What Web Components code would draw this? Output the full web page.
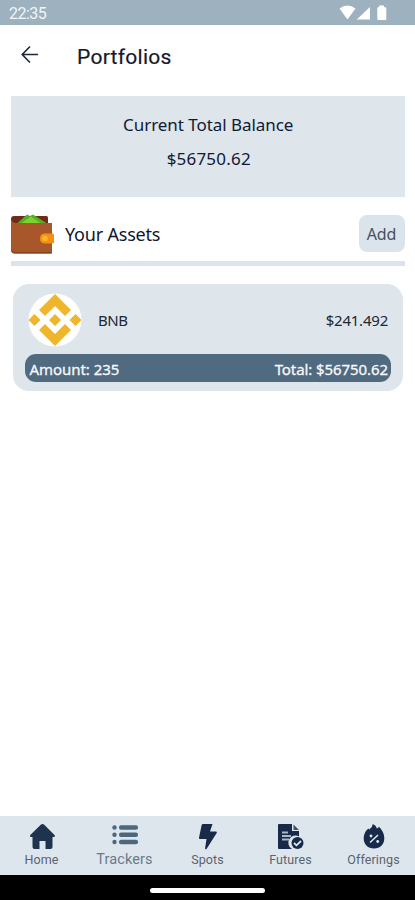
<!DOCTYPE html>
<html lang="en"><head><meta charset="utf-8"><title>Portfolios</title>
<style>
html,body{margin:0;height:100%;background:#fff}
</style></head><body>
<portfolio-app></portfolio-app>
<script>
function define(name, html){
  const t=document.createElement('template');t.innerHTML=html;
  customElements.define(name,class extends HTMLElement{
    constructor(){super();this.attachShadow({mode:'open'}).append(t.content.cloneNode(true));}
  });
}
define('status-bar',`<style>
:host{display:flex;box-sizing:border-box;height:25px;background:#9eb1be;color:#eff5f8;font:400 16px/28px Roboto,sans-serif;padding:0 28px 0 9px;justify-content:space-between}
svg{display:block}span{letter-spacing:-.5px}</style>
<span>22:35</span>
<svg width="48" height="25" viewBox="339 0 48 25" fill="#fff"><path d="M339.5 8.6Q347.500 2.600 355.500 8.600L347.500 19.600ZM370 7v12.600h-13.300ZM379 5.600h5v1.600h1.500q.8 0 .8.800v11q0 .9-.8.900h-7.400q-.8 0-.8-.9V8q0-.8.800-.8h.9Z"/></svg>`);
define('page-header',`<style>
:host{display:flex;height:71px;box-sizing:border-box;padding-left:20px;align-items:flex-start}
svg{margin-top:20px;flex:none}h1{margin:19px 0 0 37px;font:400 21px/26px Roboto,sans-serif;letter-spacing:.28px;color:#15192a;-webkit-text-stroke:.2px #15192a}</style>
<svg width="20" height="20" viewBox="0 0 20 20" fill="none" stroke="#1d2638" stroke-width="1.6"><path d="M18 9.500H2.500M10 1.500L2.200 9.500L10 17.500"/></svg><h1><slot></slot></h1>`);
define('balance-card',`<style>
:host{display:flex;flex-direction:column;align-items:center;height:101px;box-sizing:border-box;margin:0 10.500px 0 11px;background:#dee5eb;color:#111a34;font:400 17px/24px "Noto Sans",sans-serif;padding-top:17px;gap:10px}
.l{letter-spacing:-.05px;margin-left:1px}.v{letter-spacing:.2px;margin-left:2px}</style><div class="l"><slot name="label"></slot></div><div class="v"><slot></slot></div>`);
define('add-button',`<style>:host{display:block;width:46px;height:37px;border-radius:8px;background:#dbe4ea;color:#46505f;text-align:center;font:400 16px/39px "Noto Sans",sans-serif;letter-spacing:-.2px}</style><slot></slot>`);
define('assets-heading',`<style>
:host{display:flex;box-sizing:border-box;height:69px;margin:0 10.500px 0 11px;border-bottom:5px solid #dbe4ec;align-items:flex-start}
svg{margin-top:17px;flex:none}h2{font:400 18px/26px "Noto Sans",sans-serif;margin:24px auto 0 11px;color:#10162f;letter-spacing:-.2px}add-button{margin-top:18px}</style>
<svg width="43" height="40" viewBox="0 0 43 40"><path d="M0 5q0-3 3-3h32.500q1.500 0 1.500 2v6H0Z" fill="#71291a"/><path d="M6 9.500L16 .5L19 2L22 .5L36 9.500Z" fill="#55ae24"/><path d="M10 9.500L20 2.500L30 9.500Z" fill="#7bd332"/><path d="M0 5q1 4 5 4h36v29.500q0 1-1 1H4q-4 0-4-4Z" fill="#a7572a"/><path d="M0 35q1 3 4 3h37v.700q0 .8-1 .8H4q-4 0-4-4Z" fill="#8b421e"/><path d="M33 19.500h8.500q1.500 0 1.500 1.500v7q0 1.500-1.500 1.500H33q-4-.5-4-5t4-5Z" fill="#f39112"/><circle cx="34" cy="24.500" r="2.700" fill="#ffb82d"/></svg>
<h2><slot></slot></h2><add-button>Add</add-button>`);
define('asset-card',`<style>
:host{display:block;box-sizing:border-box;height:107px;margin:18px 12px 0 13px;border-radius:16px;background:#dee5eb;padding:9px 12px 0;font:400 15px/22px "Noto Sans",sans-serif;color:#202833}
.top{display:flex;align-items:center;height:54px;padding:0 3px;margin-bottom:7px}
.n{margin:0 auto 0 16px;letter-spacing:-.4px}.p{letter-spacing:-.22px}
.bar{display:flex;justify-content:space-between;height:28px;border-radius:11px;background:#506a80;color:#f6f9fc;padding:0 3px 0 4.500px;line-height:30px;-webkit-text-stroke:.3px #f6f9fc}
.bar .a{letter-spacing:-.05px}.t{letter-spacing:-.08px}
</style><div class="top"><svg width="54" height="54" viewBox="0 0 54 54"><circle cx="27" cy="27" r="26.500" fill="#fff"/><g fill="#efb62b"><path d="M27 1L43 17L37 23L27 13L17 23L11 17ZM27 53L43 37L37 31L27 41L17 31L11 37ZM27 21L33 27L27 33L21 27ZM6.500 21L12.500 27L6.500 33L.5 27ZM47.500 21L53.500 27L47.500 33L41.500 27Z"/></g></svg><span class="n"><slot name="name"></slot></span><span class="p"><slot name="price"></slot></span></div>
<div class="bar"><span class="a"><slot name="amount"></slot></span><span class="t"><slot name="total"></slot></span></div>`);
define('nav-item',`<style>:host{display:flex;flex:1;flex-direction:column;align-items:center;padding-top:7px;font:400 12.500px/16px Roboto,sans-serif;letter-spacing:.12px;color:#59636f}:host([active]){font-size:14.500px;letter-spacing:.1px;color:#687b8b}
.i{height:29px}.l{white-space:nowrap}</style><div class="i"><slot name="icon"></slot></div><div class="l"><slot></slot></div>`);
define('bottom-nav',`<style>:host{display:flex;height:59px;background:#dee6ed}svg{display:block}</style>
<nav-item><svg slot="icon" width="28" height="28" viewBox="0 0 28 28" fill="#1f3350"><path d="M14.500 1q.8 0 1.500.6L26.500 12q1 1.200-.2 2H24.500v10q0 2-2 2H17.500v-8h-6v8h-5q-2 0-2-2V14H2.500q-1-.8-.2-2L13 1.600Q13.700 1 14.500 1Z"/></svg>Home</nav-item>
<nav-item active><svg slot="icon" width="28" height="28" viewBox="0 0 28 28" fill="#4d687d"><circle cx="3.500" cy="4.500" r="2.200"/><circle cx="3.500" cy="11.700" r="2.200"/><circle cx="3.500" cy="19" r="2.200"/><rect x="8" y="2.200" width="19" height="4.600" rx="2"/><rect x="8" y="9.400" width="19" height="4.600" rx="2"/><rect x="8" y="16.700" width="19" height="4.600" rx="2"/></svg>Trackers</nav-item>
<nav-item><svg slot="icon" width="28" height="28" viewBox="0 0 28 28" fill="#172a49"><path d="M9 1h9.500L16 8.500h6q1.400.2.700 1.500L12.500 26q-1.500 1-1.400-.8L12.500 16H6q-1.300 0-1-1.300L7.600 2.300Q7.800 1 9 1Z"/></svg>Spots</nav-item>
<nav-item><svg slot="icon" width="28" height="28" viewBox="0 0 28 28"><path d="M2 1h13v7h7v5.500a7 7 0 0 0-7 12.500H2Q1 26 1 25V2Q1 1 2 1Z" fill="#172a49"/><path d="M16.500 1.500L22 7h-5.500Z" fill="#41546d"/><path d="M5 9.500h6M5 13h9M5 16.500h7" stroke="#aab8c6" stroke-width="2"/><circle cx="20.500" cy="20" r="6" fill="#172a49"/><path d="M17 20l2.500 2.300L24 18" fill="none" stroke="#dee6ed" stroke-width="1.800"/></svg>Futures</nav-item>
<nav-item><svg slot="icon" width="28" height="28" viewBox="0 0 28 28"><path d="M12.800 1Q16 2.400 17 5.500Q18.500 5 19 3.800Q24.300 9 24.300 15.200C24.300 21.500 20 25.500 14 25.500S3.700 21.500 3.700 15.500Q3.700 9.500 8.300 5.500L9.300 6.500Q12.500 4.500 12.800 1Z" fill="#172a49"/><path d="M10 19.500L18 12" stroke="#dee6ed" stroke-width="1.500"/><circle cx="11" cy="13" r="1.400" fill="#dee6ed"/><circle cx="17.700" cy="18.500" r="1.400" fill="#dee6ed"/></svg>Offerings</nav-item>`);
define('gesture-bar',`<style>:host{display:flex;height:25px;background:#000;align-items:center;justify-content:center}i{width:115px;height:5px;border-radius:3px;background:#fff;margin-top:5px}</style><i></i>`);
define('portfolio-app',`<style>:host{display:flex;flex-direction:column;width:415px;height:900px;overflow:hidden;background:#fff}bottom-nav{margin-top:auto}:host>*{flex:none}</style>
<status-bar></status-bar><page-header>Portfolios</page-header>
<balance-card><span slot="label">Current Total Balance</span>$56750.62</balance-card>
<assets-heading>Your Assets</assets-heading>
<asset-card><span slot="name">BNB</span><span slot="price">$241.492</span><span slot="amount">Amount: 235</span><span slot="total">Total: $56750.62</span></asset-card>
<bottom-nav></bottom-nav><gesture-bar></gesture-bar>`);
</script></body></html>
